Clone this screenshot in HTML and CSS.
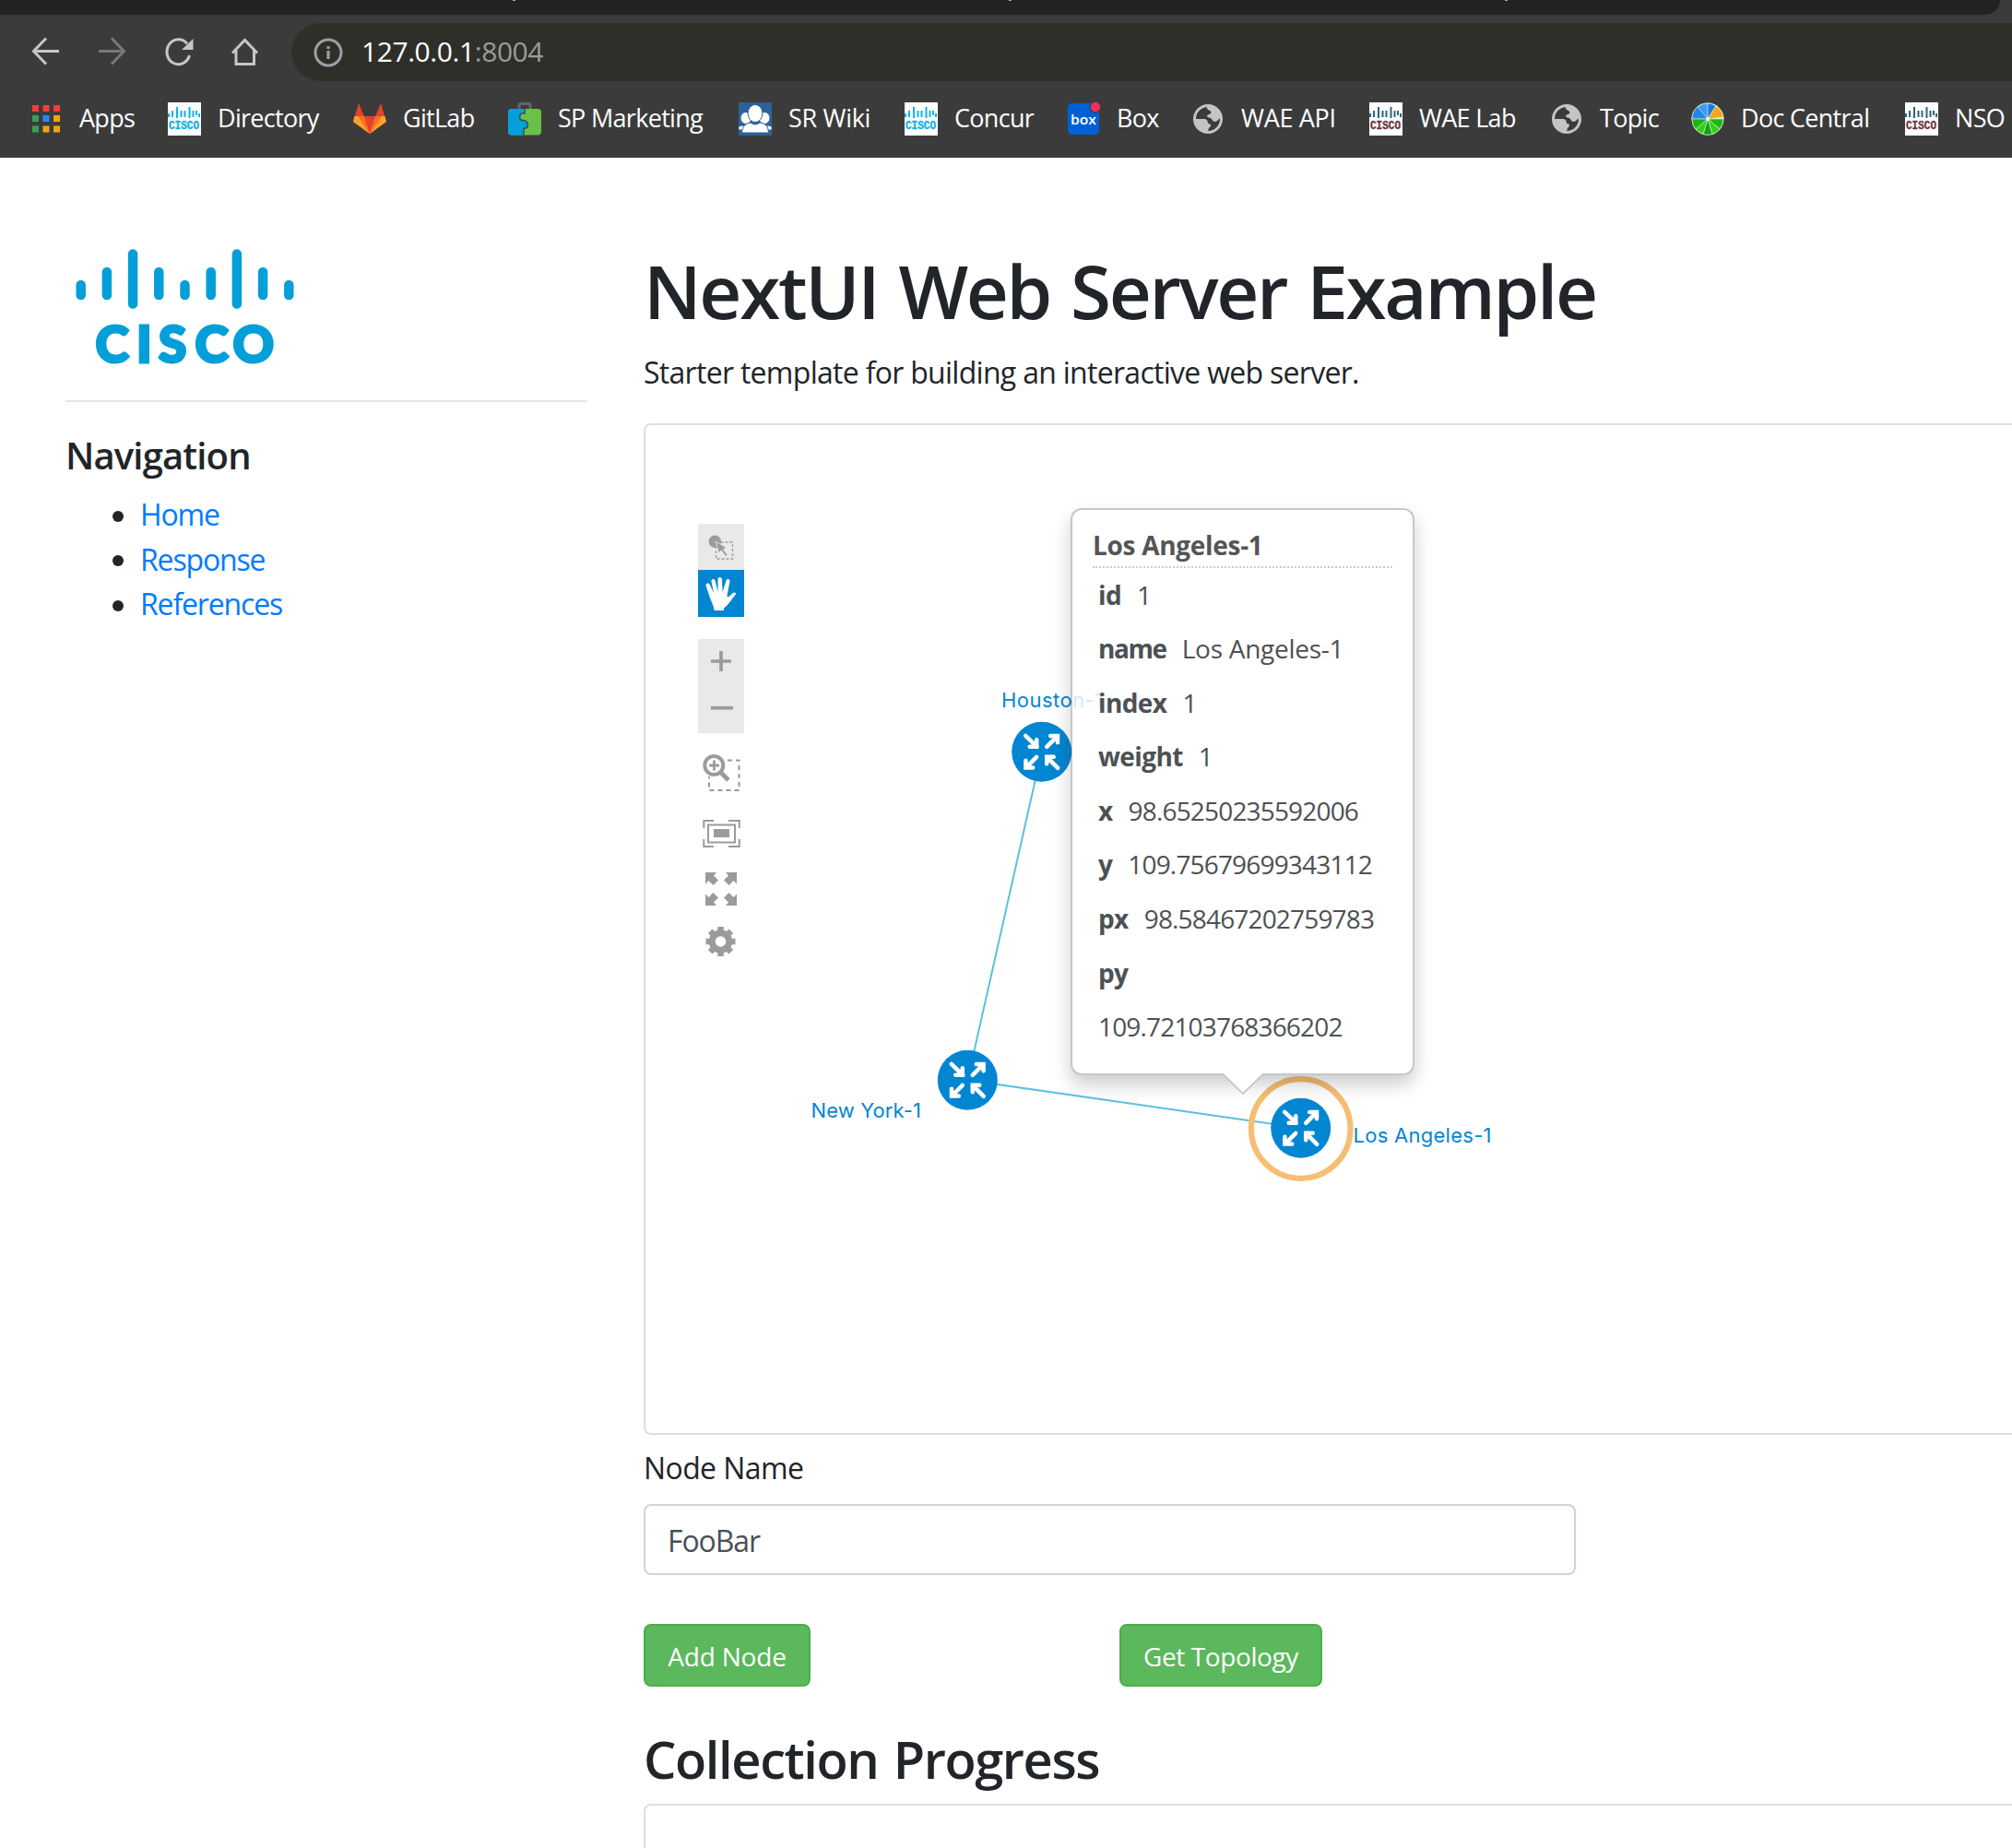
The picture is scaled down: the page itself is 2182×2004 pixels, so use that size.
FILE: index.html
```html
<!DOCTYPE html>
<html lang="en">
<head>
<meta charset="utf-8">
<title>NextUI Web Server Example</title>
<link rel="stylesheet" href="styles.css">
</head>
<body>
<svg class="defs" width="0" height="0">
  <symbol id="cisco" viewBox="0 0 36 36">
    <rect width="36" height="36" fill="#fff" stroke="none"/>
    <path d="M1 12v4M5 9v7M10 5v12M14.500 9v7M18.500 9v7M23.500 5v12M27.500 9v7M31 9v5M34 12v4" stroke-width="2"/>
    <text x="1" y="29" textLength="33" lengthAdjust="spacingAndGlyphs" class="tiny">CISCO</text>
  </symbol>
  <symbol id="globe" viewBox="0 0 36 36">
    <circle cx="18" cy="18" r="14.500" fill="#3b3b3b" stroke="#c4c4c4" stroke-width="3"/>
    <path d="M17 3C24 1 33 8 33 17C29 17 29 21 25 21C22 20 23 17 19 16.500C17 16 16 14 19 13C22 13 22 10 20 9C17 8 16 6 17 3Z" fill="#c4c4c4"/>
    <path d="M3 18H13C17 18 18 20 18 23C21 23 22 25 20 27C18 28 19 31 17 33C9 33 3 26 3 18Z" fill="#c4c4c4"/>
  </symbol>
  <symbol id="router" viewBox="-33 -33 66 66">
    <circle r="32.500" fill="#0386d2"/>
    <g fill="none" stroke="#fff" stroke-width="4.500" stroke-linecap="round" stroke-linejoin="miter">
      <path d="M-17.500-17.500L-5-5.500M-13-5.500H-5.500V-13"/>
      <path d="M5.500-5.500L17-17M9.500-17.300H17.300V-10"/>
      <path d="M-5.500 5.500L-17 17M-17.300 9.500V17.300H-9.500"/>
      <path d="M17.500 17.500L5.500 5.500M13 5.500H5.500V13"/>
    </g>
  </symbol>
</svg>

<header class="browser">
  <div class="tabstrip"><i></i><i></i><i></i></div>
  <div class="toolbar">
    <svg class="navicons" width="260" height="40" viewBox="31 36 260 40" fill="none" stroke="#c6c6c6" stroke-width="3">
      <path d="M64 55.500H37M50 41.500L36.500 55.500L50 69.500"/>
      <path d="M107 55.500H134M121 41.500L134.500 55.500L121 69.500" stroke="#787878"/>
      <path d="M205.500 60A12.500 13.500 0 1 1 203 47.500"/><path d="M209.500 42V54H197Z" fill="#c6c6c6" stroke="none"/>
      <path d="M252 57.500L265.500 43.500L279 57.500M256 54V69.500H275.500V54"/>
    </svg>
    <div class="omnibox">
      <svg width="34" height="34" viewBox="0 0 34 34"><circle cx="17" cy="17" r="14" fill="none" stroke="#9aa0a6" stroke-width="3"/><path d="M17 15V24M17 10V13" stroke="#9aa0a6" stroke-width="3.200"/></svg>
      <span class="url">127.0.0.1<span class="port">:8004</span></span>
    </div>
  </div>
  <nav class="bookmarks">
    <a><svg viewBox="0 0 36 36"><path d="M3 3h7v7h-7zM14.500 3h7v7h-7zM26 3h7v7h-7z" fill="#f33e35"/><path d="M3 14h7v7h-7zM3 25.500h7v7h-7z" fill="#34a353"/><path d="M14.500 14h7v7h-7z" fill="#2a87f0"/><path d="M26 14h7v7h-7zM14.500 25.500h7v7h-7zM26 25.500h7v7h-7z" fill="#f2a60c"/></svg><span>Apps</span></a>
    <a><svg class="fav-blue"><use href="#cisco"/></svg><span>Directory</span></a>
    <a><svg viewBox="0 0 36 36"><path d="M18 34L0 21L6 1L12 15H24L30 1L36 21Z" fill="#e24329"/><path d="M18 34L6 15H1.500L0 21ZM18 34L30 15H34.500L36 21Z" fill="#fca326"/><path d="M18 34L5 15H12ZM18 34L31 15H24Z" fill="#fc6d26"/></svg><span>GitLab</span></a>
    <a><svg viewBox="0 0 36 36"><path d="M12 8V3Q12 1.500 14 1.500H22Q24 1.500 24 3V8" fill="none" stroke="#62656b" stroke-width="3"/><rect y="7" width="36" height="28.500" rx="4" fill="#6bc04a"/><path d="M4 7H18V12C13 11 12 15 13 18C15 21 18 18 20 21C23 25 21 29 17 28V35.500H4Q0 35.500 0 31.500V11Q0 7 4 7Z" fill="#049fd9"/><path d="M18 7V12C13 11 12 15 13 18C15 21 18 18 20 21C23 25 21 29 17 28V35.500" fill="none" stroke="#2d5548" stroke-width="1.500"/></svg><span>SP Marketing</span></a>
    <a><svg viewBox="0 0 36 36"><rect width="36" height="36" fill="#2a6299"/><g fill="#fff" stroke="#2a6299" stroke-width="1"><ellipse cx="8" cy="17" rx="6" ry="6.500"/><ellipse cx="28" cy="17" rx="6" ry="6.500"/><path d="M0 26Q4 24 8 26V30H0ZM36 26Q32 24 28 26V30H36Z"/><ellipse cx="18" cy="12" rx="8" ry="9.500"/><path d="M3.500 33C4 25 8 23 13 22Q18 26 23 22C29 23 32 25 32.500 33Z"/></g></svg><span class="wide">SR Wiki</span></a>
    <a><svg class="fav-blue"><use href="#cisco"/></svg><span>Concur</span></a>
    <a><svg viewBox="0 0 36 36"><rect x="1" y="1" width="34" height="34" rx="5" fill="#0061d5"/><text x="18" y="24" text-anchor="middle" class="boxtext" textLength="28" lengthAdjust="spacingAndGlyphs">box</text><circle cx="31" cy="5" r="6.500" fill="#3b3b3b"/><circle cx="31" cy="5" r="5.200" fill="#f0325a"/></svg><span>Box</span></a>
    <a><svg><use href="#globe"/></svg><span class="wide">WAE API</span></a>
    <a><svg class="fav-red"><use href="#cisco"/></svg><span>WAE Lab</span></a>
    <a><svg><use href="#globe"/></svg><span>Topic</span></a>
    <a><svg viewBox="-18 -18 36 36"><circle r="17.500" fill="#d9f2e0"/><g stroke="#d9f2e0" stroke-width=".6"><path d="M0 0L-17 0A17 17 0 0 1 -10-14Z" fill="#2484e8"/><path d="M0 0L-11-13A17 17 0 0 1 0-17Z" fill="#3b9cf4"/><path d="M0 0L0-17A17 17 0 0 1 9-14Z" fill="#1d7be0"/><path d="M0 0L9-14A17 17 0 0 1 17-2Z" fill="#f7a51b"/><path d="M0 0L17 0A17 17 0 0 1 13 11Z" fill="#1fb414"/><path d="M0 0L13 11A17 17 0 0 1 5 16.500Z" fill="#35d016"/><path d="M0 0L5 16.500A17 17 0 0 1-5 16.500Z" fill="#17a012"/><path d="M0 0L-5 16.500A17 17 0 0 1-13 11Z" fill="#35d016"/><path d="M0 0L-13 11A17 17 0 0 1-17 0Z" fill="#1fb414"/></g><circle r="2" fill="#fff"/></svg><span>Doc Central</span></a>
    <a><svg class="fav-red"><use href="#cisco"/></svg><span>NSO</span></a>
  </nav>
</header>

<div class="page">
  <aside class="sidebar">
    <svg class="logo" width="280" height="152" viewBox="71 250 280 152">
      <g stroke="#049fd9" stroke-width="10.500" stroke-linecap="round">
        <path d="M87.700 309V320M115.900 295V320M144.100 275.500V329.500M172.300 295V320M200.500 309V320M228.700 295V320M256.900 275.500V329.500M285.100 295V320M313.300 309V320"/>
      </g>
      <text class="logotext" x="103.500 148 172 211.500 252.500" y="393">CISCO</text>
    </svg>
    <hr>
    <h5>Navigation</h5>
    <ul>
      <li><a>Home</a></li>
      <li><a>Response</a></li>
      <li><a>References</a></li>
    </ul>
  </aside>

  <main>
    <h1>NextUI Web Server Example</h1>
    <p class="lead">Starter template for building an interactive web server.</p>

    <section class="card topology">
      <div class="tools">
        <div class="toolgroup">
          <div class="tool"><svg viewBox="757 568 50 50"><circle cx="775.300" cy="587.300" r="6.700" fill="#9b9b9b"/><rect x="776.500" y="588" width="18" height="18" fill="none" stroke="#9b9b9b" stroke-width="1.300" stroke-dasharray="3 2"/><path d="M776 587L788 594L784.500 595.500L789 602L787 603.500L782.500 597L779.500 599.500Z" fill="#9b9b9b" stroke="#e9e9e9" stroke-width=".8"/></svg></div>
          <div class="tool active"><svg viewBox="757 618 50 51"><path d="M774.500 662C774 656 771 652 769.500 647L765.800 635.500C765 632.500 768.500 631.500 769.800 634L774 643L771.500 630.500C771 627.500 774.800 627 775.600 629.700L778.500 642L778.600 628C778.700 625.200 782.600 625.200 783 628L783.500 642L787.500 629.500C788.500 626.800 792 627.800 791.500 630.500L788.600 645.500C788.500 647.500 789.500 648 791 646.500L795 643C797 641.500 799 643 797.500 645C793 650.500 790 656 785 659.500V662Z" fill="#fff"/></svg></div>
        </div>
        <div class="toolgroup zoom">
          <div class="tool"><svg viewBox="0 0 50 51"><path d="M14 24H36M25 13V35" stroke="#9b9b9b" stroke-width="3.700"/></svg></div>
          <div class="tool"><svg viewBox="0 0 50 51"><path d="M14 23.700H38" stroke="#9b9b9b" stroke-width="3.700"/></svg></div>
        </div>
      </div>

      <svg class="graph" width="1484" height="1093" viewBox="700 461 1484 1093">
        <g fill="none" stroke="#5bc0de" stroke-width="2"><path d="M1129.700 815.300L1049.300 1171.300L1410.700 1223.300"/></g>
        <circle cx="1410.700" cy="1224" r="53.800" fill="none" stroke="#f5be73" stroke-width="6.200"/>
        <use href="#router" x="1096.700" y="782.300" width="66" height="66"/>
        <use href="#router" x="1016.300" y="1138.300" width="66" height="66"/>
        <use href="#router" x="1377.700" y="1190.300" width="66" height="66"/>
        <g class="nodelabel">
          <text x="1086" y="767" textLength="110">Houston-1</text>
          <text x="879.500" y="1212" textLength="119.500">New York-1</text>
          <text x="1467.500" y="1239" textLength="150">Los Angeles-1</text>
        </g>
        <g fill="none" stroke="#9b9b9b">
          <path d="M789 824.500H801.500V857H769V842" stroke-width="2" stroke-dasharray="5 4"/>
          <path d="M781 837L790 846" stroke-width="5"/><circle cx="774.300" cy="830" r="10" stroke-width="4" fill="#fff"/><path d="M769 830H780M774.500 824.500V835.500" stroke-width="2.800"/>
          <path d="M763.300 898V890H774M790 890H801.800V898M763.300 910V918H774M790 918H801.800V910" stroke-width="2"/>
          <rect x="768" y="894.500" width="29" height="19" stroke-width="2"/>
          <path d="M774 899H791V908H774Z" fill="#9b9b9b" stroke="none"/>
          <g fill="#9b9b9b" stroke="none">
            <path d="M765 946H777L774 949.500L779 954.500L773.500 960L768.500 955L765 958.500Z"/>
            <path d="M799 946V958.500L795.500 955L790.500 960L785 954.500L790 949.500L787 946Z"/>
            <path d="M765 982V969.500L768.500 973L773.500 968L779 973.500L774 978.500L777 982Z"/>
            <path d="M799 982H787L790 978.500L785 973.500L790.500 968L795.500 973L799 969.500Z"/>
          </g>
          <circle cx="781.500" cy="1021" r="9.200" stroke-width="7"/>
          <path d="M781.500 1005V1011M781.500 1031V1037M765.500 1021H771.500M791.500 1021H797.500M770.200 1009.700L774.400 1013.900M788.600 1028.100L792.800 1032.300M770.200 1032.300L774.400 1028.100M788.600 1013.900L792.800 1009.700" stroke-width="6.500"/>
        </g>
      </svg>

      <div class="tooltip">
        <div class="tip-title">Los Angeles-1</div>
        <div class="tip-row"><b>id</b><span>1</span></div>
        <div class="tip-row"><b class="tight">name</b><span class="word">Los Angeles-1</span></div>
        <div class="tip-row"><b>index</b><span>1</span></div>
        <div class="tip-row"><b>weight</b><span>1</span></div>
        <div class="tip-row"><b>x</b><span>98.65250235592006</span></div>
        <div class="tip-row"><b>y</b><span>109.75679699343112</span></div>
        <div class="tip-row"><b>px</b><span>98.58467202759783</span></div>
        <div class="tip-row wrap"><b>py</b><span>109.72103768366202</span></div>
        <svg class="tip-arrow" width="44" height="24" viewBox="0 0 44 24"><path d="M0 0L22 22L44 0Z" fill="#fff"/><path d="M0 .5L22 22L44 .5" fill="none" stroke="#bdbdbd" stroke-width="1.500"/></svg>
      </div>
    </section>

    <label class="fieldlabel">Node Name</label>
    <div class="field">FooBar</div>
    <div class="buttons">
      <div class="slot"><button class="add">Add Node</button></div>
      <div class="slot"><button class="get">Get Topology</button></div>
    </div>
    <h3>Collection Progress</h3>
    <section class="card progress"></section>
  </main>
</div>
</body>
</html>
```
FILE: styles.css
```css
* { box-sizing: border-box; }
body { margin: 0; width: 2182px; height: 2004px; overflow: hidden; background: #fff; color: #212529; font: 32px/48px "Open Sans", sans-serif; }
h1, h3, h5, p, ul { margin: 0; padding: 0; }
svg { overflow: visible; }
.defs { display: none; }

.browser { height: 171px; background: #3b3b3b; }
.tabstrip { width: 2169px; height: 16px; background: #222; border-bottom-right-radius: 18px; display: flex; gap: 535px; padding-left: 556px; }
.tabstrip i { width: 3px; height: 1px; background: #aaa; }
.toolbar { display: flex; height: 81px; padding-left: 31px; }
.navicons { margin-top: 20px; flex: none; }
.omnibox { margin: 9px 0 0 25px; height: 63px; flex: 1; background: #2f2f2a; border-radius: 31.500px 0 0 31.500px; display: flex; align-items: center; padding-left: 23px; }
.url { font-size: 30px; line-height: 40px; color: #fff; margin-left: 19px; padding-bottom: 1px; letter-spacing: -.43px; }
.port { color: #9b9b98; }
.bookmarks { display: grid; grid-template-columns: 150px 201px 168px 250px 180px 176px 135px 193px 196px 153px 232px 116px; padding: 14px 0 0 32px; font-size: 27px; line-height: 36px; color: #fff; white-space: nowrap; letter-spacing: -.7px; }
.bookmarks a { display: flex; gap: 18px; }
.bookmarks a > svg { width: 36px; height: 36px; flex: none; letter-spacing: 0; }
.bookmarks a > span { margin-top: -1px; }
.bookmarks .wide { letter-spacing: -.3px; }
.fav-blue { stroke: #0fb2ea; fill: #0fb2ea; }
.fav-red { stroke: #2c6480; fill: #a01217; }
.tiny { font: 700 12px "Liberation Mono", monospace; stroke-width: .4px; }
.fav-red .tiny { stroke: none; }
.boxtext { font: 600 15px "Open Sans", sans-serif; fill: #fff; }

.page { display: grid; grid-template-columns: 566px 1500px; gap: 61px; padding-left: 71px; }
.sidebar { padding-top: 79px; }
.logo { display: block; }
.logotext { font: 900 55px Lato, sans-serif; fill: #049fd9; stroke: #049fd9; stroke-width: 3px; }
hr { margin: 32px 0; border: 0; height: 2px; background: #e5e5e5; }
h5 { font-size: 40px; line-height: 48px; font-weight: 600; padding-top: 2px; margin-bottom: 16px; letter-spacing: -.85px; }
ul { list-style: none; padding-left: 51px; }
li { display: flex; align-items: center; gap: 18px; line-height: 48.500px; letter-spacing: -1.150px; }
li::before { content: ""; width: 12px; height: 12px; border-radius: 50%; background: #212529; margin-top: 3px; }
li a { color: #007bff; }

main { padding-top: 96px; }
h1 { font-size: 80px; line-height: 96px; font-weight: 600; margin-bottom: 17px; white-space: nowrap; letter-spacing: -2.300px; word-spacing: 3.500px; }
.lead { margin-bottom: 31px; letter-spacing: -.710px; }
.card { border: 2px solid #dfdfdf; border-radius: 8px; position: relative; }
.topology { height: 1097px; }
.tools { padding: 107px 0 0 57px; }
.toolgroup { width: 50px; background: #e9e9e9; }
.zoom { margin-top: 24px; }
.tool { height: 51px; }
.toolgroup:not(.zoom) .tool:first-child { height: 50px; }
.tool svg { display: block; width: 50px; height: 100%; }
.active { background: #0386d2; }
.graph { position: absolute; left: 0; top: 0; }
.nodelabel { font: 22px Inter, sans-serif; fill: #0386d2; }
.tooltip { position: absolute; left: 461px; top: 90px; width: 373px; height: 615px; border: 2px solid rgba(0,0,0,.22); border-radius: 12px; background: rgba(255,255,255,.82); background-clip: padding-box; box-shadow: 0 10px 20px rgba(0,0,0,.2); padding: 17px 22px; font-size: 28px; line-height: 42px; color: #4d5154; }
.tip-title { height: 46px; font-weight: 700; color: #555; border-bottom: 2px dotted #ccc; white-space: nowrap; line-height: 42px; letter-spacing: -.3px; }
.tip-row { height: 58.600px; padding: 7.500px 0 0 6px; display: flex; gap: 17px; white-space: nowrap; letter-spacing: -.83px; }
.tip-row b { letter-spacing: -.6px; }
.tip-row .tight { letter-spacing: -1.400px; }
.tip-row .word { letter-spacing: -.28px; }
.wrap { display: block; height: 117px; }
.wrap b, .wrap span { display: block; }
.wrap span { margin-top: 16.500px; }
.tip-arrow { position: absolute; left: 163px; top: 611px; }

.fieldlabel { display: block; margin: 12px 0 15px; letter-spacing: -.6px; }
.field { width: 1011px; height: 77px; border: 2px solid #ced4da; border-radius: 8px; padding: 14px 24px; color: #495057; letter-spacing: -1.100px; }
.buttons { display: flex; margin-top: 53px; }
.slot { width: 516px; }
button { display: block; height: 68px; padding: 12px 0 10px; border: 2px solid #4cae4c; border-radius: 8px; background: #5cb85c; color: #fff; font: 28px/42px "Open Sans", sans-serif; white-space: nowrap; }
.add { width: 181px; letter-spacing: -.2px; }
.get { width: 220px; letter-spacing: -.4px; }
h3 { font-size: 56px; line-height: 67px; font-weight: 600; margin: 45px 0 15px; letter-spacing: -1.400px; word-spacing: 3px; }
.progress { height: 48px; border-bottom: 0; border-radius: 8px 8px 0 0; }
```
